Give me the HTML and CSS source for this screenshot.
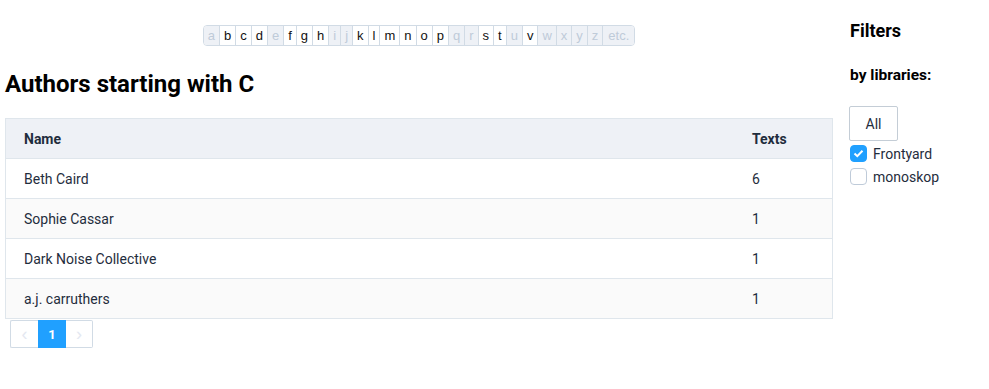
FILE: index.html
```html
<!DOCTYPE html>
<html lang="en">
<head>
    <meta charset="UTF-8" />
    <title>Authors starting with C</title>
    <link rel="stylesheet" href="styles.css">
</head>
<body>
<div class="page">
    <div class="main">
        <!-- alphabet -->
        <div class="letters-wrap">
            <div class="letters">
                <span class="off">a</span><a href="#">b</a><a href="#">c</a><a href="#">d</a><span class="off">e</span><a href="#">f</a><a href="#">g</a><a href="#">h</a><span class="off">i</span><span class="off">j</span><a href="#">k</a><a href="#">l</a><a href="#">m</a><a href="#">n</a><a href="#">o</a><a href="#">p</a><span class="off">q</span><span class="off">r</span><a href="#">s</a><a href="#">t</a><span class="off">u</span><a href="#">v</a><span class="off">w</span><span class="off">x</span><span class="off">y</span><span class="off">z</span><span class="off etc">etc.</span>
            </div>
        </div>

        <h1>Authors starting with C</h1>

        <table class="authors">
            <thead>
                <tr><th>Name</th><th class="num">Texts</th></tr>
            </thead>
            <tbody>
                <tr><td>Beth Caird</td><td class="num">6</td></tr>
                <tr class="striped"><td>Sophie Cassar</td><td class="num">1</td></tr>
                <tr><td>Dark Noise Collective</td><td class="num">1</td></tr>
                <tr class="striped"><td>a.j. carruthers</td><td class="num">1</td></tr>
            </tbody>
        </table>

        <div class="pager">
            <button class="pg-btn" disabled>&#8249;</button>
            <span class="pg-num active">1</span>
            <button class="pg-btn" disabled>&#8250;</button>
        </div>
    </div>

    <!-- Filtros -->
    <div class="sidebar">
        <h2>Filters</h2>
        <h3>by libraries:</h3>
        <button class="all-btn">All</button>
        <label class="check">
            <span class="box on">
                <svg width="11" height="9" viewBox="0 0 11 9"><path d="M1.5 4.5 L4.3 7.2 L9.5 1.8" fill="none" stroke="#fff" stroke-width="2"/></svg>
            </span>
            Frontyard
        </label>
        <label class="check">
            <span class="box"></span>
            monoskop
        </label>
    </div>
</div>
</body>
</html>
```

FILE: styles.css
```css
body {
    margin: 0;
    font-family: Roboto, "Liberation Sans", sans-serif;
    color: #1f2d3d;
    background: #fff;
}
.page {
    display: flex;
    padding-left: 5px;
}
.main {
    width: 828px;
}
.letters-wrap {
    display: flex;
    justify-content: center;
    padding-top: 25px;
}
.letters {
    display: flex;
    border: 1px solid #d1dbe5;
    border-radius: 4px;
    overflow: hidden;
    font-family: "Liberation Sans", Arial, sans-serif;
    font-size: 13px;
    height: 19px;
}
.letters a, .letters span {
    display: flex;
    align-items: center;
    padding: 0 4px;
    border-left: 1px solid #d1dbe5;
    color: #111;
    text-decoration: none;
    background: #fff;
}
.letters > :first-child {
    border-left: none;
}
.letters .off {
    background: #eef1f6;
    color: #bfcbd9;
}
.letters .etc {
    padding: 0 5px;
}
h1 {
    font-size: 24px;
    font-weight: bold;
    margin: 24px 0 20px;
    color: #000;
}
.authors {
    width: 100%;
    border-collapse: collapse;
    border: 1px solid #dfe6ec;
    font-size: 14px;
}
.authors th, .authors td {
    height: 39px;
    padding: 0 18px;
    text-align: left;
    border-bottom: 1px solid #dfe6ec;
}
.authors th {
    background: #eef1f6;
    font-weight: bold;
}
.authors .num {
    width: 62px;
}
.authors tr.striped td {
    background: #fafafa;
}
.pager {
    display: flex;
    margin: 1px 0 0 5px;
}
.pg-btn, .pg-num {
    width: 28px;
    height: 28px;
    box-sizing: border-box;
    border: 1px solid #d1dbe5;
    background: #fff;
    color: #e4e8f1;
    font-size: 18px;
    padding: 0;
}
.pg-btn:first-child {
    border-radius: 2px 0 0 2px;
    border-right: none;
}
.pg-btn:last-child {
    border-radius: 0 2px 2px 0;
    border-left: none;
    width: 27px;
}
.pg-num {
    display: flex;
    align-items: center;
    justify-content: center;
    font-size: 13px;
    font-weight: bold;
}
.pg-num.active {
    background: #20a0ff;
    border-color: #20a0ff;
    color: #fff;
}
.sidebar {
    margin-left: 17px;
    padding-top: 20px;
}
h2 {
    font-size: 18px;
    font-weight: bold;
    margin: 0 0 25px;
    color: #000;
}
h3 {
    font-size: 15.5px;
    font-weight: bold;
    margin: 0 0 22px;
    color: #000;
}
.all-btn {
    font-family: Roboto, sans-serif;
    font-size: 14px;
    color: #1f2d3d;
    background: #fff;
    border: 1px solid #c4cdd6;
    border-radius: 2px;
    width: 49px;
    height: 35px;
    margin-left: -1px;
    margin-bottom: 1px;
}
.check {
    display: flex;
    align-items: center;
    gap: 6px;
    font-size: 14px;
    height: 23px;
}
.box {
    width: 15px;
    height: 15px;
    border: 1px solid #bfcbd9;
    border-radius: 4px;
    display: flex;
    align-items: center;
    justify-content: center;
    background: #fff;
}
.box.on {
    background: #20a0ff;
    border-color: #20a0ff;
}
```
